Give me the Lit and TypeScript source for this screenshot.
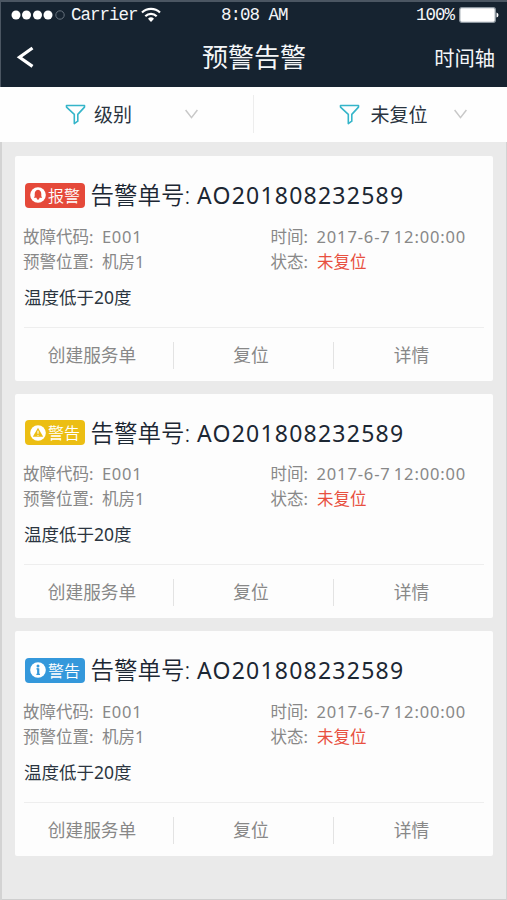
import { LitElement, html, css, svg } from "lit";
import { customElement, property } from "lit/decorators.js";

type Level = "alarm" | "warning" | "info";

interface Alert {
  level: Level;
  tag: string;
}

const ALERTS: Alert[] = [
  { level: "alarm", tag: "报警" },
  { level: "warning", tag: "警告" },
  { level: "info", tag: "警告" },
];

const fonts = css`"Noto Sans", "Noto Sans CJK SC", sans-serif`;
const cjkFonts = css`"Noto Sans CJK SC", "Noto Sans", sans-serif`;

const glyphs = {
  alarm: svg`<path d="M8 2.800C5.600 3 4.700 4.800 4.700 7.200v2L3.800 10.800h2.700q.2 2 1.500 2t1.500-2h2.700l-.9-1.600v-2C11.300 4.800 10.400 3 8 2.800z" fill="#e5493a"/>`,
  warning: svg`<path d="M8 2.800 13.200 11.800H2.800z" fill="#ecbe13"/><path d="M8 5.800v3" stroke="#fff" stroke-width="1.100"/><circle cx="8" cy="10.300" r=".6" fill="#fff"/>`,
  info: svg`<circle cx="8" cy="3.900" r="1.500" fill="#3498db"/><path d="M6.400 6.900h2M6.400 12.300h3.600" stroke="#3498db" stroke-width="1.200" fill="none"/><path d="M8.200 6.300v6.600" stroke="#3498db" stroke-width="2.200"/>`,
};

@customElement("alert-card")
export class AlertCard extends LitElement {
  @property() level: Level = "alarm";
  @property() tag = "";

  static styles = css`
    :host {
      display: flex;
      flex-direction: column;
      box-sizing: border-box;
      width: 478px;
      height: 224.500px;
      background: #fdfdfd;
      border-radius: 2px;
      font-family: ${fonts};
      color: #888;
      white-space: nowrap;
    }
    .head {
      display: flex;
      align-items: center;
      height: 28px;
      margin: 25px 0 0 9.500px;
      color: #1c2733;
    }
    .badge {
      display: flex;
      align-items: center;
      box-sizing: border-box;
      width: 60.500px;
      height: 25px;
      padding-left: 5px;
      gap: 2.500px;
      border-radius: 4px;
      color: #fff;
      font: 350 16px/25px ${cjkFonts};
    }
    .badge svg {
      width: 16px;
      height: 16px;
      flex: none;
    }
    .alarm { background: #e5493a; }
    .warning { background: #ecbe13; }
    .info { background: #3498db; }
    .label {
      width: 112px;
      padding-left: 5.500px;
      box-sizing: border-box;
      font-size: 23.500px;
      line-height: 28px;
      font-weight: 350;
    }
    .number {
      font-size: 23px;
      line-height: 28px;
      letter-spacing: 1.230px;
    }
    .facts {
      display: grid;
      grid-template-columns: 79px 168.500px 46px auto;
      grid-auto-rows: 25px;
      margin: 14.500px 0 0 8px;
      font-size: 16.500px;
      line-height: 25px;
    }
    .code { letter-spacing: 0.700px; }
    .time {
      letter-spacing: 0.860px;
      word-spacing: -2px;
    }
    .open {
      padding-left: 0.500px;
      color: #e8503f;
    }
    .message {
      margin: 11px 0 0 9px;
      font-size: 17.500px;
      line-height: 24px;
      color: #2b3540;
    }
    .actions {
      display: grid;
      grid-template-columns: 150px 160px 159px;
      align-items: center;
      height: 52px;
      margin: 18px 9px 0 9px;
      border-top: 1px solid #eee;
    }
    .action {
      box-sizing: border-box;
      height: 27px;
      margin-top: 3px;
      border-right: 1px solid #e3e3e3;
      text-align: center;
      font-size: 17.700px;
      line-height: 27px;
    }
    .action:nth-child(1) { padding-right: 13px; }
    .action:nth-child(2) { padding-right: 5px; }
    .action:nth-child(3) { padding-right: 4px; border: 0; }
  `;

  render() {
    return html`
      <div class="head">
        <span class="badge ${this.level}">
          <svg viewBox="0 0 16 16"><circle cx="8" cy="8" r="7.800" fill="#fff" />${glyphs[this.level]}</svg>
          ${this.tag}
        </span>
        <span class="label">告警单号:</span>
        <span class="number">AO201808232589</span>
      </div>
      <div class="facts">
        <span>故障代码:</span><span class="code">E001</span><span>时间:</span><span class="time">2017-6-7 12:00:00</span>
        <span>预警位置:</span><span>机房1</span><span>状态:</span><span class="open">未复位</span>
      </div>
      <div class="message">温度低于20度</div>
      <div class="actions">
        <span class="action">创建服务单</span>
        <span class="action">复位</span>
        <span class="action">详情</span>
      </div>
    `;
  }
}

@customElement("app-root")
export class AppRoot extends LitElement {
  static styles = css`
    :host {
      display: flex;
      flex-direction: column;
      box-sizing: border-box;
      width: 507px;
      height: 900px;
      overflow: hidden;
      background: #eaeaea;
      font-family: ${cjkFonts};
      box-shadow: inset 2px 0 #d3d3d3, inset -1px 0 #d3d3d3, inset 0 -1px #cfcfcf;
      white-space: nowrap;
    }
    .top {
      box-sizing: border-box;
      height: 86.500px;
      background: #162330;
      border-top: 2px solid #4b5662;
      border-left: 1px solid #4b5662;
      color: #f4f6f8;
    }
    .status {
      display: grid;
      grid-template-columns: 70px 150px 1fr auto;
      align-items: center;
      height: 26px;
      font: 17.500px/26px "Liberation Mono", monospace;
      letter-spacing: -1px;
    }
    .carrier, .power { display: flex; align-items: center; }
    .dots { width: 54px; height: 12px; margin-left: 10px; }
    .wifi { width: 20px; height: 16px; margin-left: 3px; }
    .battery { width: 40px; height: 16px; margin: 0 8px 0 5px; }
    .nav {
      display: grid;
      grid-template-columns: 105px 1fr 105px;
      align-items: center;
      height: 57px;
    }
    .back { width: 20px; height: 24px; margin-left: 13px; }
    .title {
      text-align: center;
      font-size: 26px;
      line-height: 36px;
      margin-top: -2px;
    }
    .timeline {
      padding-right: 12px;
      text-align: right;
      font-size: 20.300px;
      line-height: 30px;
    }
    .filters {
      display: grid;
      grid-template-columns: 1fr 1fr;
      align-items: center;
      height: 55px;
      background: #fefefe;
      color: #2a3440;
      font-size: 19px;
      line-height: 28px;
    }
    .filter {
      display: flex;
      align-items: center;
      box-sizing: border-box;
      height: 38px;
    }
    .filter:first-child {
      padding-left: 65px;
      border-right: 1px solid #ededed;
    }
    .filter:last-child { padding-left: 85px; }
    .funnel { width: 21px; height: 21px; }
    .filter:first-child .name { width: 91px; margin-left: 8px; }
    .filter:last-child .name { width: 83px; margin-left: 11px; }
    .chevron { width: 13px; height: 10px; }
    .list {
      display: flex;
      flex-direction: column;
      gap: 13px;
      padding: 14.500px 0 0 15px;
    }
  `;

  private filter(name: string) {
    return html`
      <div class="filter">
        <svg class="funnel" viewBox="0 0 21 21" fill="none" stroke="#35b5c9" stroke-width="1.600" stroke-linejoin="round">
          <path d="M1.500 1.500h18v1.600l-6.700 7.300v6.800l-3.500 2.400v-9.200L1.500 3.100z" />
        </svg>
        <span class="name">${name}</span>
        <svg class="chevron" viewBox="0 0 13 10" fill="none" stroke="#c8c8c8" stroke-width="1.500">
          <path d="M.6 1l5.900 7.600L12.400 1" />
        </svg>
      </div>
    `;
  }

  render() {
    return html`
      <div class="top">
        <div class="status">
          <svg class="dots" viewBox="0 0 54 12" fill="#fff">
            <circle cx="5" cy="6" r="4.500" /><circle cx="15.500" cy="6" r="4.500" />
            <circle cx="26.500" cy="6" r="4.500" /><circle cx="37" cy="6" r="4.500" />
            <circle cx="49" cy="6" r="4.200" fill="none" stroke="#66717c" />
          </svg>
          <span class="carrier">
            Carrier
            <svg class="wifi" viewBox="0 0 20 16" fill="none" stroke="#fff" stroke-width="2.200">
              <path d="M1 5.500a13 13 0 0 1 18 0M4.300 9.200a8.300 8.300 0 0 1 11.400 0" />
              <path d="M10 15l-3-3.200a4.300 4.300 0 0 1 6 0z" fill="#fff" stroke="none" />
            </svg>
          </span>
          <span>8:08 AM</span>
          <span class="power">
            100%
            <svg class="battery" viewBox="0 0 40 16">
              <rect x=".7" y=".7" width="35.600" height="14.600" rx="2" fill="#fff" stroke="#8b959e" stroke-width="1.300" />
              <path d="M37.500 5.500q2 .5 2 2.500t-2 2.500z" fill="#fff" />
            </svg>
          </span>
        </div>
        <div class="nav">
          <svg class="back" viewBox="0 0 20 24" fill="none" stroke="#fff" stroke-width="3.200">
            <path d="M18.500 3 5.500 12.200 18.500 21.400" />
          </svg>
          <span class="title">预警告警</span>
          <span class="timeline">时间轴</span>
        </div>
      </div>
      <div class="filters">${this.filter("级别")}${this.filter("未复位")}</div>
      <div class="list">
        ${ALERTS.map((a) => html`<alert-card .level=${a.level} .tag=${a.tag}></alert-card>`)}
      </div>
    `;
  }
}
